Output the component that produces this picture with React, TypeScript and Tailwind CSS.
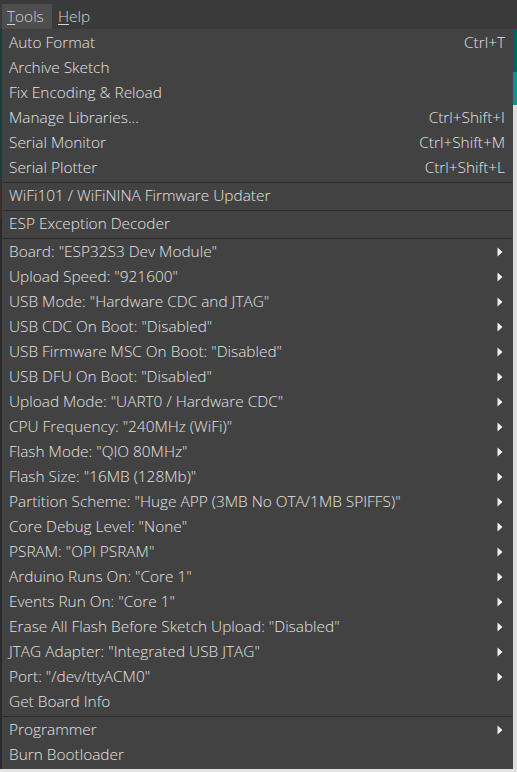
import React from 'react';

type Item =
  | { kind: 'item'; label: string; shortcut?: string; submenu?: boolean }
  | { kind: 'sep' };

const items: Item[] = [
  { kind: 'item', label: 'Auto Format', shortcut: 'Ctrl+T' },
  { kind: 'item', label: 'Archive Sketch' },
  { kind: 'item', label: 'Fix Encoding & Reload' },
  { kind: 'item', label: 'Manage Libraries...', shortcut: 'Ctrl+Shift+I' },
  { kind: 'item', label: 'Serial Monitor', shortcut: 'Ctrl+Shift+M' },
  { kind: 'item', label: 'Serial Plotter', shortcut: 'Ctrl+Shift+L' },
  { kind: 'sep' },
  { kind: 'item', label: 'WiFi101 / WiFiNINA Firmware Updater' },
  { kind: 'sep' },
  { kind: 'item', label: 'ESP Exception Decoder' },
  { kind: 'sep' },
  { kind: 'item', label: 'Board: "ESP32S3 Dev Module"', submenu: true },
  { kind: 'item', label: 'Upload Speed: "921600"', submenu: true },
  { kind: 'item', label: 'USB Mode: "Hardware CDC and JTAG"', submenu: true },
  { kind: 'item', label: 'USB CDC On Boot: "Disabled"', submenu: true },
  { kind: 'item', label: 'USB Firmware MSC On Boot: "Disabled"', submenu: true },
  { kind: 'item', label: 'USB DFU On Boot: "Disabled"', submenu: true },
  { kind: 'item', label: 'Upload Mode: "UART0 / Hardware CDC"', submenu: true },
  { kind: 'item', label: 'CPU Frequency: "240MHz (WiFi)"', submenu: true },
  { kind: 'item', label: 'Flash Mode: "QIO 80MHz"', submenu: true },
  { kind: 'item', label: 'Flash Size: "16MB (128Mb)"', submenu: true },
  { kind: 'item', label: 'Partition Scheme: "Huge APP (3MB No OTA/1MB SPIFFS)"', submenu: true },
  { kind: 'item', label: 'Core Debug Level: "None"', submenu: true },
  { kind: 'item', label: 'PSRAM: "OPI PSRAM"', submenu: true },
  { kind: 'item', label: 'Arduino Runs On: "Core 1"', submenu: true },
  { kind: 'item', label: 'Events Run On: "Core 1"', submenu: true },
  { kind: 'item', label: 'Erase All Flash Before Sketch Upload: "Disabled"', submenu: true },
  { kind: 'item', label: 'JTAG Adapter: "Integrated USB JTAG"', submenu: true },
  { kind: 'item', label: 'Port: "/dev/ttyACM0"', submenu: true },
  { kind: 'item', label: 'Get Board Info' },
  { kind: 'sep' },
  { kind: 'item', label: 'Programmer', submenu: true },
  { kind: 'item', label: 'Burn Bootloader' },
];

const Arrow = () => (
  <svg width="6" height="10" viewBox="0 0 6 10" className="shrink-0">
    <path d="M0.5 0.5 L5.5 5 L0.5 9.5 Z" fill="#f2f2f2" />
  </svg>
);

export default function App() {
  return (
    <div
      className="w-[517px] h-[772px] bg-[#e4e4e4] overflow-hidden text-[#e2e2e2] font-light"
      style={{ fontFamily: '"Open Sans", "Noto Sans", sans-serif' }}
    >
      {/* menu bar */}
      <div className="h-[29px] bg-[#3a3a3a] flex items-end pl-[2px] text-[15.4px] text-[#d4d4d4]">
        <div className="h-[25px] w-[50px] bg-[#4e4e4e] flex items-center pl-[5px]">
          <span>
            <span className="underline underline-offset-2">T</span>ools
          </span>
        </div>
        <div className="h-[25px] flex items-center pl-[6px]">
          <span>
            <span className="underline underline-offset-2">H</span>elp
          </span>
        </div>
      </div>

      <div className="flex h-[740px]">
        <div className="w-[2px] flex flex-col">
          <div className="h-[150px] bg-[#1f3b3c]" />
          <div className="h-[40px] bg-[#3a2f28]" />
          <div className="flex-1 bg-[#2a2a2a]" />
        </div>

        {/* dropdown panel */}
        <div className="w-[511px] h-[740px] bg-[#424242] pt-px text-[15.4px]">
          {items.map((it, i) =>
            it.kind === 'sep' ? (
              <div key={i} className="h-[3px] pt-[2px] px-px">
                <div className="h-px bg-[#2c2c2c]" />
              </div>
            ) : (
              <div key={i} className="h-[25px] flex items-center pl-[7px] pr-[8px]">
                <span className="flex-1 whitespace-nowrap">{it.label}</span>
                {it.shortcut && <span className="whitespace-nowrap">{it.shortcut}</span>}
                {it.submenu && (
                  <span className="pr-[2px] flex items-center">
                    <Arrow />
                  </span>
                )}
              </div>
            )
          )}
        </div>

        <div className="w-[4px] flex flex-col">
          <div className="h-[43px] bg-[#0a5f5f]" />
          <div className="h-[33px] bg-[#178f8c]" />
          <div className="flex-1 bg-[#e0e0e0]" />
        </div>
      </div>
    </div>
  );
}
